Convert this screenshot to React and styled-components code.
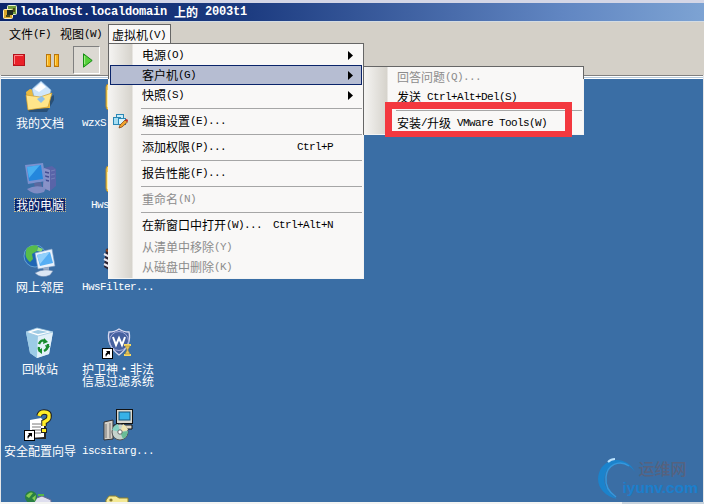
import React from "react";
import styled, { createGlobalStyle } from "styled-components";

const GlobalStyle = createGlobalStyle`
  * {
    box-sizing: border-box;
  }
  body {
    margin: 0;
    overflow: hidden;
    background: #d4d0c8;
    font-family: "Noto Sans CJK SC", sans-serif;
    font-size: 12px;
    line-height: 12px;
    color: #000;
  }
`;

// Chinese glyphs are 12px wide and latin ones 6px, so they are set apart
function Label({ children, wide }) {
  const parts = children.match(/[\x20-\x7e]+|[^\x20-\x7e]+/g);
  return (
    <Line>
      {parts.map((part, i) =>
        /^[\x20-\x7e]/.test(part) ? (
          <Latin key={i} $wide={wide}>
            {part}
          </Latin>
        ) : (
          <span key={i}>{part}</span>
        )
      )}
    </Line>
  );
}

const menuItems = [
  { text: "电源(O)", sub: true },
  { text: "客户机(G)", sub: true, active: true },
  { text: "快照(S)", sub: true },
  { line: true },
  { text: "编辑设置(E)...", icon: true },
  { line: true },
  { text: "添加权限(P)...", keys: "Ctrl+P" },
  { line: true },
  { text: "报告性能(F)..." },
  { line: true },
  { text: "重命名(N)", disabled: true },
  { line: true },
  { text: "在新窗口中打开(W)...", keys: "Ctrl+Alt+N" },
  { space: true },
  { text: "从清单中移除(Y)", disabled: true },
  { text: "从磁盘中删除(K)", disabled: true },
];

const guestItems = [
  { text: "回答问题(Q)...", disabled: true },
  { text: "发送 Ctrl+Alt+Del(S)" },
  { line: true },
  { text: "安装/升级 VMware Tools(W)" },
];

const shortcuts = [
  { icon: DocumentsIcon, lines: ["我的文档"] },
  { icon: FolderIcon, lines: ["wzxS"], indent: 2 },
  { icon: ComputerIcon, lines: ["我的电脑"], selected: true },
  { icon: FolderIcon, lines: ["Hws"], indent: 11 },
  { icon: NetworkIcon, lines: ["网上邻居"] },
  { icon: BooksIcon, lines: ["HwsFilter..."] },
  { icon: RecycleIcon, lines: ["回收站"] },
  { icon: ShieldIcon, lines: ["护卫神·非法", "信息过滤系统"] },
  { icon: WizardIcon, lines: ["安全配置向导"] },
  { icon: InstallerIcon, lines: ["iscsitarg..."] },
  { icon: ServerIcon, lines: [] },
  { icon: KeyIcon, lines: [] },
];

function MenuList({ items }) {
  return items.map((item, i) => {
    if (item.line) return <Separator key={i} />;
    if (item.space) return <Space key={i} />;
    return (
      <MenuItem key={i} $active={item.active} $disabled={item.disabled}>
        <IconSlot>{item.icon && <SettingsIcon />}</IconSlot>
        <Label>{item.text}</Label>
        {item.keys && (
          <Keys>
            <Label>{item.keys}</Label>
          </Keys>
        )}
        {item.sub && (
          <Arrow width="5" height="9" viewBox="0 0 5 9">
            <path d="M0 0L5 4.5L0 9z" fill="#000" />
          </Arrow>
        )}
      </MenuItem>
    );
  });
}

function App() {
  return (
    <Window>
      <GlobalStyle />
      <TitleBar>
        <VmIcon />
        <Label wide>localhost.localdomain 上的 2003t1</Label>
      </TitleBar>
      <MenuBar>
        <MenuName>
          <Label>文件(F)</Label>
        </MenuName>
        <MenuName>
          <Label>视图(W)</Label>
        </MenuName>
        <OpenMenu>
          <Label>虚拟机(V)</Label>
          <Menu>
            <MenuList items={menuItems} />
            <SubMenu>
              <MenuList items={guestItems} />
              <Highlight />
            </SubMenu>
          </Menu>
        </OpenMenu>
      </MenuBar>
      <ToolBar>
        <ToolButton>
          <svg width="12" height="12" viewBox="0 0 12 12">
            <rect x=".5" y=".5" width="11" height="11" fill="#e92129" stroke="#b5121b" />
            <path d="M1.5 10V1.5H10" fill="none" stroke="#ff8587" />
          </svg>
        </ToolButton>
        <ToolButton>
          <svg width="13" height="13" viewBox="0 0 13 13">
            <rect x=".5" y=".5" width="4" height="12" fill="#f9b21d" stroke="#b9750b" />
            <rect x="8.5" y=".5" width="4" height="12" fill="#f9b21d" stroke="#b9750b" />
            <path d="M1.5 1.5V11M9.5 1.5V11" stroke="#ffdc6a" />
          </svg>
        </ToolButton>
        <ToolButton $pressed>
          <svg width="10" height="15" viewBox="0 0 10 15">
            <path d="M.5 .8L9.2 7.5L.5 14.2z" fill="#55d039" stroke="#168a16" />
            <path d="M1.6 3V11" stroke="#a5f08d" />
          </svg>
        </ToolButton>
      </ToolBar>
      <Desktop>
        {shortcuts.map(({ icon: Icon, lines, selected, indent }, i) => (
          <Shortcut key={i}>
            <Icon />
            <Caption $selected={selected} $indent={indent}>
              {lines.map((line) => (
                <Label key={line}>{line}</Label>
              ))}
            </Caption>
          </Shortcut>
        ))}
        <Watermark>
          <svg width="40" height="43" viewBox="0 0 40 43">
            <path
              d="M38 15C30-2 7 0 2 16C-2 29 7 39 20 42C9 34 5 25 9 15C15 4 29 3 38 15z"
              fill="#1b83cc"
            />
            <path d="M32 9C22 2 10 8 9 20C8 29 13 36 19 40" fill="none" stroke="#3597dc" strokeWidth="1.5" />
            <path d="M11 5Q14 2 18 2" fill="none" stroke="#bce4ff" strokeWidth="2" />
          </svg>
          <div>
            <SiteName>运维网</SiteName>
            <SiteUrl>iyunv.com</SiteUrl>
          </div>
        </Watermark>
      </Desktop>
      <StatusEdge />
    </Window>
  );
}

function VmIcon() {
  return (
    <svg width="17" height="17" viewBox="0 0 17 17">
      <rect x="5.5" y="1.5" width="9" height="9" rx="1" fill="#6f9c3d" stroke="#e8efcf" />
      <rect x="1.5" y="5.5" width="9" height="9" rx="1" fill="#d9a62c" stroke="#fff0b8" />
      <rect x="5" y="6" width="6" height="5" fill="#1d2b22" />
      <path d="M4 12H8M12 4V8" stroke="#4d4a18" strokeWidth="2" />
    </svg>
  );
}

function SettingsIcon() {
  return (
    <svg width="17" height="17" viewBox="0 0 17 17">
      <rect x="4.5" y="1.5" width="7" height="7" fill="#c9ecf8" stroke="#2a87b5" />
      <rect x="1.5" y="4.5" width="7" height="7" fill="#a7def2" stroke="#2a87b5" />
      <rect x="6.5" y="5.5" width="7" height="6" fill="#d9f3fb" stroke="#2a87b5" />
      <path d="M7 15L8 12L13 7L15.5 9L10 14z" fill="#f0a22c" stroke="#7a3b12" strokeWidth=".7" />
      <path d="M13 7L15.5 9L16 7L14.5 6z" fill="#c62828" />
    </svg>
  );
}

function DocumentsIcon() {
  return (
    <svg width="32" height="32" viewBox="0 0 32 32">
      <path d="M4 29L5 31H23L30 19V14z" fill="#1c3a57" opacity=".6" />
      <path d="M2 11L6 8L13 10L26 12V27L4 28z" fill="#e9b93f" />
      <path d="M8 8L17 0L27 9L25 19L11 20z" fill="#cfe6fb" stroke="#7ba9d6" strokeWidth=".7" />
      <path d="M10 8L17 2L22 6L15 11z" fill="#fff" />
      <path d="M2 14L16 16L28 12L24 26L4 29z" fill="#ffe58a" stroke="#d19c28" strokeWidth=".7" />
      <path d="M13 18L18 15L21 18L17 22z" fill="#8fc0e8" />
    </svg>
  );
}

function FolderIcon() {
  return (
    <svg width="32" height="32" viewBox="0 0 32 32">
      <path d="M4 6Q4 3 7 3H14L17 6H28V29H6Q4 28 4 25z" fill="#f4cf5c" stroke="#b98b24" />
      <path d="M6 9V26" stroke="#fff0a5" strokeWidth="2" />
    </svg>
  );
}

function ComputerIcon() {
  return (
    <svg width="34" height="32" viewBox="0 0 34 32">
      <path d="M21 5L29 3L33 6V23L27 28L20 25z" fill="#5964a8" />
      <path d="M21 5L27 7V28L20 25z" fill="#8992c8" />
      <path d="M22 9L26 10M22 13L26 14M22 17L26 18" stroke="#424e93" strokeWidth="1.3" />
      <path d="M28 8L32 7M28 12L32 11M28 16L32 15" stroke="#7480b9" />
      <path d="M2 2L20 0L23 18L5 21z" fill="#7b91ce" />
      <path d="M4 4L18 2L20 16L6 18z" fill="#2487dd" />
      <path d="M4 4L17 2L6 15z" fill="#4aaff0" />
      <path d="M11 20L18 19L19 24L12 25z" fill="#5b689f" />
      <path d="M4 26Q13 21 23 25L21 29Q11 33 4 26z" fill="#7f8cc4" />
    </svg>
  );
}

function NetworkIcon() {
  return (
    <svg width="34" height="32" viewBox="0 0 34 32">
      <circle cx="12" cy="11" r="11" fill="#1f66b4" stroke="#8fc6e8" strokeWidth=".6" />
      <path d="M4 3Q10-1 15 1L14 6L9 9L10 14L7 17Q0 12 4 3z" fill="#58bd4a" />
      <path d="M15 2L20 4L18 7L14 6z" fill="#8cdd72" />
      <path d="M12 8L29 4L32 21L15 24z" fill="#e8f1fb" stroke="#789bc1" strokeWidth=".6" />
      <path d="M14 10L27 7L30 18L17 21z" fill="#55aef4" />
      <path d="M14 10L27 7L17 19z" fill="#91d0fb" />
      <path d="M20 23L26 22L26 26L21 27z" fill="#9aadc8" />
      <path d="M12 28Q20 23 30 26L27 30Q18 34 12 28z" fill="#dce7f4" stroke="#7189ac" strokeWidth=".5" />
    </svg>
  );
}

function BooksIcon() {
  return (
    <svg width="32" height="32" viewBox="0 0 32 32">
      <path d="M4 4L10 2L28 8V30L10 27L2 22z" fill="#2b2231" />
      <path d="M2 9L12 14M2 14L12 19M2 19L12 24" stroke="#e9e6ee" strokeWidth="2" />
      <path d="M4 5L12 9" stroke="#8c4a2b" strokeWidth="2" />
    </svg>
  );
}

function RecycleIcon() {
  return (
    <svg width="32" height="32" viewBox="0 0 32 32">
      <path d="M2 5L13 2L29 5L25 27L13 31L6 26z" fill="#c6e3f3" />
      <path d="M2 5L14 9L13 31L6 26z" fill="#9ccbe6" />
      <path d="M14 9L29 5L25 27L13 31z" fill="#e2f1f9" />
      <path d="M2 5L13 1L29 5L14 9z" fill="#fff" stroke="#9bc7e2" strokeWidth=".8" />
      <path d="M7 5L14 3L24 5L14 7z" fill="#9fcbe4" />
      <g fill="none" stroke="#168b2e" strokeWidth="2.4">
        <path d="M15 17Q17 12 21 14M24 17Q24 22 20 24M18 24Q14 24 15 20" />
      </g>
      <path d="M20 11L24 15L19 17zM26 19L21 18L23 23zM18 21V27L14 24z" fill="#168b2e" />
    </svg>
  );
}

function LinkMark() {
  return (
    <g>
      <rect x=".5" y="21.5" width="10" height="10" fill="#fff" stroke="#000" />
      <path d="M4 24H8V28L6.7 26.7Q4.5 27.5 4 30Q2.5 27 5.2 25.3z" fill="#000" />
    </g>
  );
}

function ShieldIcon() {
  return (
    <svg width="32" height="32" viewBox="0 0 32 32">
      <path
        d="M17 2Q21 5 27 5Q30 18 17 28Q4 18 7 5Q13 5 17 2z"
        fill="#46609f"
        stroke="#d9daf1"
        strokeWidth="1.3"
      />
      <circle cx="17" cy="14" r="9.5" fill="none" stroke="#a5addb" />
      <path d="M11 10L14 18L17 11L20 18L23 10" fill="none" stroke="#fff" strokeWidth="2" />
      <path d="M22 18H29M22 28H29" stroke="#f8d860" strokeWidth="2" />
      <path d="M23 19H28L26 23L28 27H23L25 23z" fill="#e6c55a" stroke="#907a38" strokeWidth=".5" />
      <LinkMark />
    </svg>
  );
}

function WizardIcon() {
  return (
    <svg width="32" height="32" viewBox="0 0 32 32">
      <path d="M7 12L18 10L22 13V30H6z" fill="#222" />
      <path d="M6 11L17 9L20 12V28L6 29z" fill="#fff" />
      <path d="M8 15H17M8 18H17M8 21H17M11 24H17" stroke="#777" />
      <path d="M15 7Q16 3 20 3Q26 3 25 8Q25 11 20 13V17" fill="none" stroke="#222" strokeWidth="5.5" />
      <path d="M15 7Q16 3 20 3Q26 3 25 8Q25 11 20 13V17" fill="none" stroke="#ffed28" strokeWidth="3.5" />
      <rect x="17.5" y="19.5" width="5" height="4" fill="#ffed28" stroke="#222" />
      <LinkMark />
    </svg>
  );
}

function InstallerIcon() {
  return (
    <svg width="32" height="32" viewBox="0 0 32 32">
      <path d="M2 13L11 11V30L2 31z" fill="#d4d0c8" stroke="#333" />
      <path d="M4 15V29M8 14V29" stroke="#777" />
      <rect x="14.5" y=".5" width="16" height="14" fill="#d9d8cf" stroke="#111" />
      <rect x="17" y="3" width="11" height="8" fill="#36b1e7" stroke="#12557e" />
      <path d="M12 16H30V20H12z" fill="#ddd8c9" stroke="#111" />
      <circle cx="18" cy="23" r="8" fill="#c6d3cc" stroke="#555" />
      <path d="M18 23L10 21Q12 16 16 15z" fill="#84d2c3" />
      <path d="M18 23L26 22Q26 27 21 30z" fill="#69bd97" />
      <path d="M18 23L21 15Q25 17 26 21z" fill="#efe6b2" />
      <circle cx="18" cy="23" r="2.2" fill="#fff" stroke="#666" />
    </svg>
  );
}

function ServerIcon() {
  return (
    <svg width="32" height="32" viewBox="0 0 32 32">
      <path d="M10 8L18 5L27 9V25L18 28L10 24z" fill="#dedeee" stroke="#6a6a91" />
      <circle cx="7" cy="6" r="6" fill="#287f43" />
      <path d="M2 5Q6 0 9 2L5 7zM8 7L12 4L11 10z" fill="#84cc51" />
      <path d="M14 4H20" stroke="#55b64a" strokeWidth="2" />
    </svg>
  );
}

function KeyIcon() {
  return (
    <svg width="32" height="32" viewBox="0 0 32 32">
      <path d="M4 9L7 5H14L17 7H26V14H17L14 20H4z" fill="#f4e995" stroke="#8c812f" />
      <circle cx="9" cy="9" r="1.6" fill="#86782d" />
    </svg>
  );
}

export default App;

const Window = styled.div`
  display: flex;
  flex-direction: column;
  width: 704px;
  height: 504px;
  border-top: 3px solid #d4d6e6;
`;

const Line = styled.span`
  display: flex;
  align-items: center;
  height: 12px;
  white-space: pre;
`;

const Latin = styled.span`
  font-family: "Liberation Mono", monospace;
  font-size: ${(p) => (p.$wide ? "12px" : "11px")};
  letter-spacing: ${(p) => (p.$wide ? "-0.2px" : "-0.6px")};
`;

const TitleBar = styled.div`
  display: flex;
  align-items: center;
  gap: 1px;
  flex: none;
  height: 18px;
  padding-left: 2px;
  background: linear-gradient(90deg, #0a246a 0%, #1c3b80 35%, #6186c2 80%, #7da3d3 100%);
  color: #fff;
  font-weight: bold;
`;

const MenuBar = styled.div`
  display: flex;
  flex: none;
  height: 24px;
  padding: 2px 0 0 9px;
  background: #d4d0c8;
  border-top: 1px solid #d3dbe2;
`;

const MenuName = styled.div`
  display: flex;
  align-items: center;
  width: 51px;
  height: 20px;
`;

const OpenMenu = styled.div`
  position: relative;
  display: flex;
  align-items: center;
  width: 63px;
  height: 20px;
  margin-left: -3px;
  padding-left: 3px;
  background: #f9f8f7;
  border: 1px solid #666;
  border-bottom: none;
`;

// the frame only stands out while it lies over the grey bars
const Menu = styled.div`
  position: absolute;
  z-index: 2;
  top: 18px;
  left: -1px;
  width: 256px;
  padding: 1px 1px 0;
  height: 236px;
  background: linear-gradient(90deg, #f5f4f2, #d6d3cc 23px, #f9f8f7 24px);
  border: 1px solid;
  border-image: linear-gradient(#666 36px, #f4f4f3 36px) 1;
`;

const SubMenu = styled.div`
  position: absolute;
  top: 22px;
  left: 255px;
  width: 220px;
  height: 69px;
  padding: 0 1px;
  background: linear-gradient(90deg, #f5f4f2, #d6d3cc 23px, #f9f8f7 24px);
  border: 1px solid;
  border-left: none;
  border-image: linear-gradient(#666 13px, #f4f4f3 13px) 1;
  box-shadow: -1px 0 #666;
`;

const MenuItem = styled.div`
  display: flex;
  align-items: center;
  position: relative;
  height: 20px;
  color: ${(p) => (p.$disabled ? "#8c8c8c" : "#000")};
  background: ${(p) => (p.$active ? "#b6bdd2" : "transparent")};
  box-shadow: ${(p) => (p.$active ? "inset 0 0 0 1px #0a246a" : "none")};
`;

const IconSlot = styled.span`
  display: flex;
  width: 32px;
  padding-left: 2px;
`;

const Keys = styled.span`
  margin-left: auto;
  padding-right: 29px;
`;

const Arrow = styled.svg`
  margin-left: auto;
  margin-right: 9px;
`;

const Separator = styled.div`
  height: 6px;
  margin-left: 31px;
  border-top: 3px solid transparent;
  background: linear-gradient(#a6a6a6 1px, transparent 1px) padding-box;
`;

const Space = styled.div`
  height: 2px;
`;

const Highlight = styled.div`
  position: absolute;
  top: 35px;
  left: 21px;
  width: 187px;
  height: 35px;
  border: 7px solid #f3383f;
  border-bottom-width: 6px;
`;

const ToolBar = styled.div`
  display: flex;
  align-items: center;
  flex: none;
  height: 30px;
  padding-left: 5px;
  gap: 7px;
  background: #d4d0c8;
`;

const ToolButton = styled.div`
  display: flex;
  align-items: center;
  justify-content: center;
  width: 27px;
  height: 28px;
  padding-left: ${(p) => (p.$pressed ? "3px" : "0")};
  border: 1px solid transparent;
  border-color: ${(p) => (p.$pressed ? "#808080 #fff #fff #808080" : "transparent")};
  background: ${(p) => (p.$pressed ? "#dcd9d3" : "none")};
`;

const Desktop = styled.div`
  position: relative;
  display: grid;
  grid-template-columns: 78px 78px;
  grid-auto-rows: 82px;
  flex: 1;
  overflow: hidden;
  padding-top: 6px;
  border-left: 1px solid #e4e6e8;
  border-right: 1px solid #e4e6e8;
  background: linear-gradient(
    #808080 1px,
    #fff 1px 2px,
    #b4c8da 2px 3px,
    #fff 3px 4px,
    #3a6ea5 4px
  );
  color: #fff;
`;

const Shortcut = styled.div`
  display: flex;
  flex-direction: column;
  align-items: center;
  gap: 4px;
`;

const Caption = styled.div`
  display: flex;
  flex-direction: column;
  align-self: ${(p) => (p.$indent ? "flex-start" : "center")};
  margin-left: ${(p) => p.$indent || 0}px;
  padding: 0 1px;
  white-space: nowrap;
  background: ${(p) => (p.$selected ? "#0a246a" : "none")};
  outline: ${(p) => (p.$selected ? "1px dotted #c7b78b" : "none")};
`;

const Watermark = styled.div`
  position: absolute;
  right: 5px;
  bottom: 2px;
  display: flex;
`;

const SiteName = styled.div`
  padding: 3px 0 0 1px;
  font-size: 16px;
  font-weight: 500;
  line-height: 16px;
  color: #56627f;
`;

const SiteUrl = styled.div`
  margin: 4px 0 0 -15px;
  font: bold 15.5px/16px "Liberation Sans", sans-serif;
  color: #1c7fcc;
`;

const StatusEdge = styled.div`
  flex: none;
  height: 2px;
  background: linear-gradient(90deg, #f4f4f2 622px, #c9d3dc 622px);
`;
